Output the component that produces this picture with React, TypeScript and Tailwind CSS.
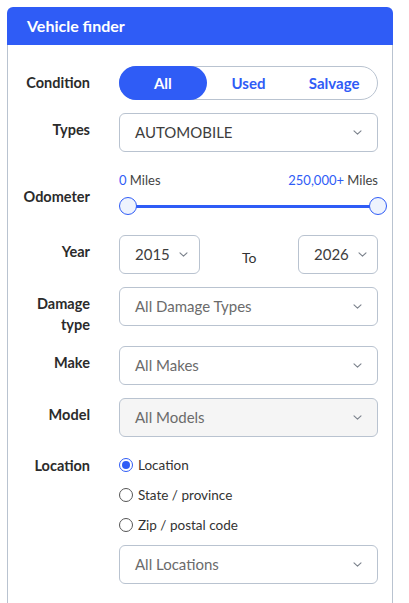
import React, { useState } from 'react';

const Chevron: React.FC = () => (
  <svg width="9" height="5" viewBox="0 0 9 5" className="shrink-0">
    <path d="M1 0.8l3.5 3.4 3.5-3.4" fill="none" stroke="#7b828c" strokeWidth="1.1" strokeLinecap="round" strokeLinejoin="round" />
  </svg>
);

const Select: React.FC<{ value: string; placeholder?: boolean; disabled?: boolean; className?: string }> = ({
  value,
  placeholder,
  disabled,
  className = '',
}) => (
  <div
    className={`flex h-[39px] items-center justify-between rounded-[6px] border border-[#b9c3d0] pl-[15px] pr-[15px] ${
      disabled ? 'bg-[#f5f5f5]' : 'bg-white'
    } ${className}`}
  >
    <span className={`text-[15px] ${placeholder ? 'text-[#6b6b6b]' : 'text-[#3d3d3d]'}`}>{value}</span>
    <Chevron />
  </div>
);

const Label: React.FC<{ children: React.ReactNode }> = ({ children }) => (
  <div className="w-[82px] shrink-0 pt-[7px] text-right text-[14.5px] font-bold leading-[20px] text-[#2b2b2b]">{children}</div>
);

const Radio: React.FC<{ label: string; checked?: boolean }> = ({ label, checked }) => (
  <div className="flex h-[30px] items-center">
    <span
      className={`flex h-[14px] w-[14px] items-center justify-center rounded-full border ${
        checked ? 'border-[#2f5cf6]' : 'border-[#555]'
      } bg-white`}
    >
      {checked && <span className="h-[8px] w-[8px] rounded-full bg-[#2f5cf6]" />}
    </span>
    <span className="ml-[5px] text-[13.5px] text-[#333]">{label}</span>
  </div>
);

export default function App() {
  const [condition, setCondition] = useState('All');

  return (
    <div className="min-h-screen bg-white pl-[7px] pt-[7px]" style={{ fontFamily: 'Lato, "Open Sans", sans-serif' }}>
      <div className="w-[386px]">
        <div className="flex h-[38px] items-center rounded-t-[6px] bg-[#2f5cf6] pl-[20px]">
          <h1 className="text-[16px] font-bold text-white">Vehicle finder</h1>
        </div>

        <div className="border border-t-0 border-[#b9c3d0] pb-[40px] pt-[21px]">
          <div className="flex">
            <div className="flex w-[82px] shrink-0 items-center justify-end text-[14.5px] font-bold text-[#2b2b2b]">Condition</div>
            <div className="ml-[29px] flex h-[34px] w-[259px] rounded-full border border-[#b9c3d0]">
              {['All', 'Used', 'Salvage'].map(c => (
                <button
                  key={c}
                  onClick={() => setCondition(c)}
                  className={`-m-px h-[34px] flex-1 rounded-full text-[15px] font-bold ${
                    condition === c ? 'bg-[#2f5cf6] text-white' : 'text-[#2f5cf6]'
                  }`}
                >
                  {c}
                </button>
              ))}
            </div>
          </div>

          <div className="mt-[13px] flex">
            <Label>Types</Label>
            <Select value="AUTOMOBILE" className="ml-[29px] w-[259px]" />
          </div>

          <div className="mt-[21px] flex">
            <div className="w-[82px] shrink-0 pt-[14px] text-right text-[14.5px] font-bold leading-[20px] text-[#2b2b2b]">Odometer</div>
            <div className="ml-[29px] w-[259px]">
              <div className="flex h-[16px] items-center justify-between text-[13px] text-[#444]">
                <span>
                  <span className="text-[#2f5cf6]">0</span> Miles
                </span>
                <span>
                  <span className="text-[#2f5cf6]">250,000+</span> Miles
                </span>
              </div>
              <div className="relative mt-[8px] h-[18px]">
                <div className="absolute left-[9px] right-[-1px] top-[7.5px] h-[3px] bg-[#2f5cf6]" />
                <div className="absolute left-0 top-0 h-[18px] w-[18px] rounded-full border-[1.5px] border-[#2f5cf6] bg-[#eef3fd]" />
                <div className="absolute right-[-9px] top-0 h-[18px] w-[18px] rounded-full border-[1.5px] border-[#2f5cf6] bg-[#eef3fd]" />
              </div>
            </div>
          </div>

          <div className="mt-[20px] flex">
            <Label>Year</Label>
            <div className="ml-[29px] flex w-[259px] items-center">
              <div className="flex h-[39px] w-[81px] items-center rounded-[6px] border border-[#b9c3d0] pl-[15px]">
                <span className="text-[15px] text-[#3d3d3d]">2015</span>
                <span className="ml-[9px]">
                  <Chevron />
                </span>
              </div>
              <span className="ml-[42px] mt-[5px] text-[14px] text-[#333]">To</span>
              <div className="ml-auto flex h-[39px] w-[80px] items-center rounded-[6px] border border-[#b9c3d0] pl-[15px]">
                <span className="text-[15px] text-[#3d3d3d]">2026</span>
                <span className="ml-[9px]">
                  <Chevron />
                </span>
              </div>
            </div>
          </div>

          <div className="mt-[13px] flex">
            <div className="w-[82px] shrink-0 pt-[6px] text-right text-[14.5px] font-bold leading-[21px] text-[#2b2b2b]">
              Damage
              <br />
              type
            </div>
            <Select value="All Damage Types" placeholder className="ml-[29px] w-[259px]" />
          </div>

          <div className="mt-[11px] flex">
            <Label>Make</Label>
            <Select value="All Makes" placeholder className="ml-[29px] w-[259px]" />
          </div>

          <div className="mt-[13px] flex">
            <Label>Model</Label>
            <Select value="All Models" placeholder disabled className="ml-[29px] w-[259px]" />
          </div>

          <div className="mt-[13px] flex">
            <div className="w-[82px] shrink-0 pt-[6px] text-right text-[14.5px] font-bold leading-[20px] text-[#2b2b2b]">Location</div>
            <div className="ml-[29px] w-[259px]">
              <Radio label="Location" checked />
              <Radio label="State / province" />
              <Radio label="Zip / postal code" />
              <Select value="All Locations" placeholder className="mt-[5px]" />
            </div>
          </div>
        </div>
      </div>
    </div>
  );
}
